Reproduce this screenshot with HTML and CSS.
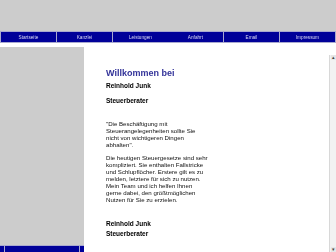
FILE: index.html
```html
<!DOCTYPE html>
<html lang="de">
<head>
<meta charset="utf-8">
<title>Reinhold Junk Steuerberater</title>
<link rel="stylesheet" href="styles.css">
</head>
<body>
<div class="page">
  <div class="header"></div>
  <nav class="nav">
    <a class="nav-item">Startseite</a>
    <a class="nav-item">Kanzlei</a>
    <a class="nav-item">Leistungen</a>
    <a class="nav-item">Anfahrt</a>
    <a class="nav-item">Email</a>
    <a class="nav-item">Impressum</a>
  </nav>
  <div class="gap"></div>
  <div class="main">
    <div class="sidebar">
      <div class="sidebar-fill"></div>
      <div class="sidebar-bar"><span class="bar-cell bar-a"></span><span class="bar-cell bar-b"></span><span class="bar-cell bar-c"></span></div>
    </div>
    <div class="content">
      <h1 class="title">Willkommen bei</h1>
      <p class="name">Reinhold Junk</p>
      <p class="role">Steuerberater</p>
      <p class="text quote">"Die Beschäftigung mit<br>Steuerangelegenheiten sollte Sie<br>nicht von wichtigeren Dingen<br>abhalten".</p>
      <p class="text">Die heutigen Steuergesetze sind sehr<br>kompliziert. Sie enthalten Fallstricke<br>und Schlupflöcher. Erstere gilt es zu<br>melden, letztere für sich zu nutzen.<br>Mein Team und ich helfen Ihnen<br>gerne dabei, den größtmöglichen<br>Nutzen für Sie zu erzielen.</p>
      <p class="sig">Reinhold Junk</p>
      <p class="sig sig-2">Steuerberater</p>
    </div>
    <div class="scrollbar">
      <span class="arrow">&#9652;</span>
      <span class="arrow">&#9662;</span>
    </div>
  </div>
</div>
</body>
</html>
```
FILE: styles.css
```css
html, body {
  margin: 0;
  padding: 0;
  background: #ffffff;
}
.page {
  width: 336px;
  height: 252px;
  overflow: hidden;
  font-family: "Liberation Sans", Arial, sans-serif;
}
.header {
  height: 31px;
  background: #cccccc;
}
.nav {
  display: flex;
  height: 12px;
  gap: 1px;
  padding: 0 1px;
  background: #a9a9cf;
  box-sizing: border-box;
}
.nav-item {
  flex: 1;
  background: #000099;
  color: #dcdcf6;
  font-size: 4.7px;
  display: flex;
  align-items: center;
  justify-content: center;
  margin: 1px 0;
  will-change: transform;
}
.gap {
  height: 4px;
}
.main {
  display: flex;
  height: 205px;
}
.sidebar {
  width: 84px;
  display: flex;
  flex-direction: column;
}
.sidebar-fill {
  height: 198px;
  background: #cccccc;
}
.sidebar-bar {
  height: 7px;
  display: flex;
  background: #a9a9cf;
  gap: 1px;
  padding-top: 1px;
  box-sizing: border-box;
}
.bar-cell {
  background: #000099;
}
.bar-a { width: 4px; }
.bar-b { flex: 1; }
.bar-c { width: 4px; }
.content {
  flex: 1;
  padding: 21px 0 0 22px;
  color: #111111;
  will-change: transform;
}
.title {
  margin: 0;
  font-size: 9px;
  line-height: 11px;
  font-weight: bold;
  color: #333399;
}
.name, .role, .sig {
  margin: 0;
  font-size: 6.5px;
  line-height: 8px;
  font-weight: bold;
  color: #000000;
}
.name { margin-top: 3px; }
.role { margin-top: 7px; }
.text {
  margin: 6px 0 0;
  font-size: 6.1px;
  line-height: 7px;
}
.quote { margin-top: 15px; }
.sig { margin-top: 17px; }
.sig-2 { margin-top: 2px; }
.scrollbar {
  width: 6px;
  margin-top: 8px;
  background: #f2f2f2;
  border-left: 1px solid #d8d8d8;
  display: flex;
  flex-direction: column;
  justify-content: space-between;
  align-items: center;
}
.arrow {
  font-size: 5px;
  line-height: 5px;
  color: #444;
  background: #e6e6e6;
  width: 5px;
  text-align: center;
}
```
